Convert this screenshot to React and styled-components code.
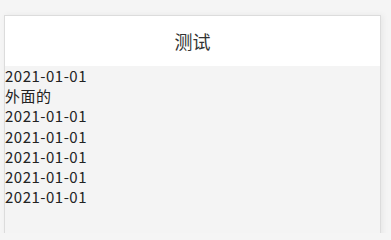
import React from "react";
import styled, { createGlobalStyle } from "styled-components";

const Global = createGlobalStyle`
  html, body { margin: 0; padding: 0; background: #f5f5f5; }
  body { font-family: "Noto Sans CJK SC", "Noto Sans", sans-serif; overflow: hidden; }
`;

const Page = styled.div`
  padding: 15px 0 0 4px;
  height: 233px;
  box-sizing: border-box;
  overflow: hidden;
`;

const Frame = styled.div`
  width: 377px;
  height: 240px;
  box-sizing: border-box;
  border: 1px solid #dcdcdc;
  background: #f4f4f4;
  box-shadow: 2px 0 6px rgba(0, 0, 0, 0.06);
`;

const Header = styled.div`
  height: 50px;
  background: #ffffff;
  display: flex;
  align-items: center;
  justify-content: center;
  font-size: 18px;
  color: #333;
`;

const List = styled.div`
  display: flex;
  flex-direction: column;
`;

const Row = styled.div`
  font-size: 15px;
  line-height: 20.2px;
  letter-spacing: 0.5px;
  color: #222;
`;

const items = ["2021-01-01", "外面的", "2021-01-01", "2021-01-01", "2021-01-01", "2021-01-01", "2021-01-01"];

export default function App() {
  return (
    <>
      <Global />
      <Page>
        <Frame>
          <Header>测试</Header>
          <List>
            {items.map((t, i) => (
              <Row key={i}>{t}</Row>
            ))}
          </List>
        </Frame>
      </Page>
    </>
  );
}
